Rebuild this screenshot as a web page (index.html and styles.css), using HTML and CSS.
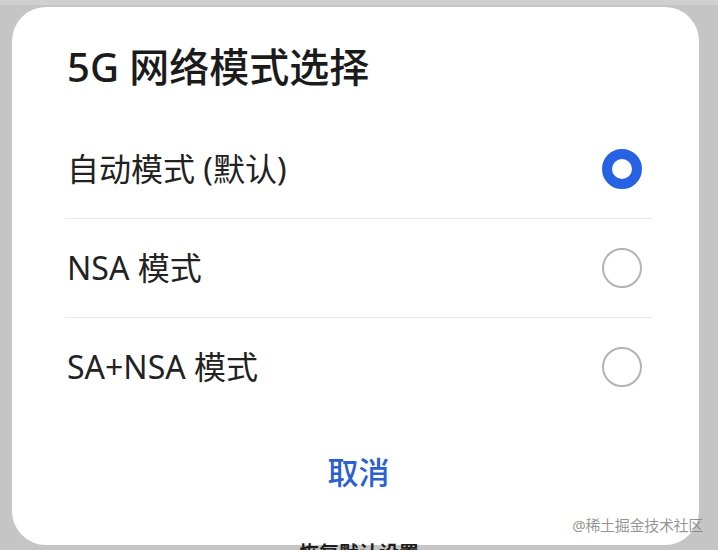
FILE: index.html
```html
<!DOCTYPE html>
<html lang="zh-CN">
<head>
<meta charset="utf-8">
<title>5G 网络模式选择</title>
<link rel="stylesheet" href="styles.css">
</head>
<body>
<div class="screen">
  <div class="dialog">
    <h1 class="title">5G 网络模式选择</h1>
    <ul class="options">
      <li class="option">
        <span class="label">自动模式 (默认)</span>
        <span class="radio radio-on"></span>
      </li>
      <li class="option">
        <span class="label">NSA 模式</span>
        <span class="radio"></span>
      </li>
      <li class="option">
        <span class="label">SA+NSA 模式</span>
        <span class="radio"></span>
      </li>
    </ul>
    <div class="footer"><span class="cancel">取消</span></div>
  </div>
  <div class="behind">恢复默认设置</div>
  <div class="watermark">@稀土掘金技术社区</div>
</div>
</body>
</html>
```

FILE: styles.css
```css
html, body {
  margin: 0;
  padding: 0;
}
body {
  background: #c6c6c6;
  font-family: "Noto Sans", "Noto Sans CJK SC", sans-serif;
  width: 718px;
  height: 550px;
  overflow: hidden;
}
.screen {
  position: relative;
  width: 718px;
  height: 550px;
  overflow: hidden;
  padding-top: 7px;
  box-sizing: border-box;
  background: linear-gradient(#d0d0d0 0, #d0d0d0 5px, #c5c5c5 5px);
}
.dialog {
  margin-left: 12px;
  width: 687px;
  height: 538px;
  background: #ffffff;
  border-radius: 34px;
  box-sizing: border-box;
  padding: 36px 47px 0 53px;
  display: flex;
  flex-direction: column;
}
.title {
  margin: 0 0 29px 0;
  padding-left: 2px;
  font-size: 40px;
  line-height: 48px;
  font-weight: 500;
  color: #1b1b1b;
}
.options {
  list-style: none;
  margin: 0;
  padding: 0;
}
.option {
  display: flex;
  align-items: center;
  justify-content: space-between;
  height: 98px;
  padding: 0 10px 0 2px;
  box-sizing: border-box;
}
.option + .option {
  border-top: 1px solid #e6e6e6;
  height: 99px;
}
.label {
  font-size: 32px;
  color: #222222;
  line-height: 40px;
}
.radio {
  width: 40px;
  height: 40px;
  border-radius: 50%;
  border: 2px solid #b3b3b3;
  box-sizing: border-box;
}
.radio-on {
  border: 10px solid #2761e4;
}
.footer {
  margin-top: 24px;
  height: 64px;
  display: flex;
  align-items: center;
  justify-content: center;
}
.cancel {
  font-size: 31px;
  font-weight: 500;
  color: #2c5fd3;
  line-height: 64px;
}
.behind {
  text-align: center;
  font-size: 20px;
  line-height: 18px;
  font-weight: 700;
  color: #1e1e1e;
}
.watermark {
  position: absolute;
  right: 15px;
  top: 514px;
  font-size: 15px;
  line-height: 22px;
  color: rgba(130, 130, 130, 0.85);
  letter-spacing: -0.3px;
}
```
